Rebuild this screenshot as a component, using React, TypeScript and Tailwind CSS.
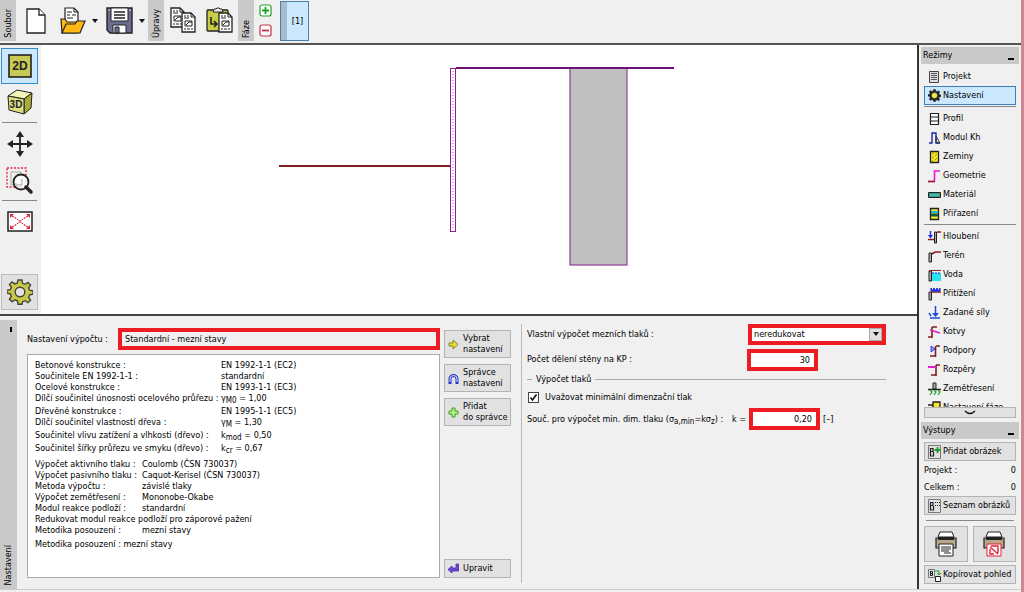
import React, { useState } from "react";
import clsx from "clsx";

type IconProps = { w: number; h: number; children: React.ReactNode };

function Icon({ w, h, children }: IconProps) {
  return (
    <svg width={w} height={h} viewBox={`0 0 ${w} ${h}`} fill="none" className="shrink-0" aria-hidden="true">
      {children}
    </svg>
  );
}

// ---- toolbar icons ----
const NewIcon = () => (
  <Icon w={20} h={26}>
    <path d="M1 1h12l6 6v18H1z" fill="#fff" stroke="#222" strokeWidth="1.3" />
    <path d="M13 1v6h6" fill="#fff" stroke="#222" strokeWidth="1.3" />
  </Icon>
);

const OpenIcon = () => (
  <Icon w={26} h={27}>
    <path d="M5 1h9l4 4v14H5z" fill="#fff" stroke="#222" strokeWidth="1.2" />
    <path d="M7 5h5M7 8h3M12 8h4M7 11h6M14 1v4h4" stroke="#222" />
    <path d="M1 12h4l2 3h12l-1 11H2z" fill="#fcb813" stroke="#222" strokeWidth="1.2" />
    <path d="M2 26l4-9h9l2-3h8l-5 12z" fill="#fcb813" stroke="#222" strokeWidth="1.2" />
  </Icon>
);

const SaveIcon = () => (
  <Icon w={27} h={27}>
    <path d="M1 1h25v25H4l-3-3z" fill="#6a6c90" stroke="#222" strokeWidth="1.4" />
    <path d="M5 1h17v13H5z" fill="#fff" stroke="#222" />
    <path d="M8 5h11M8 8h11M8 11h11" stroke="#222" strokeWidth="1.3" />
    <path d="M7 18h13v8H7z" fill="#fff" stroke="#222" />
    <path d="M9 20h4v6H9z" fill="#6a6c90" stroke="#222" />
    <path d="M2 3h2M23 3h2" stroke="#ddd" />
  </Icon>
);

const Page = ({ x, y }: { x: number; y: number }) => (
  <g transform={`translate(${x} ${y})`}>
    <path d="M1 1h9l4 4v15H1z" fill="#fff" stroke="#222" strokeWidth="1.3" />
    <path d="M10 1v4h4M3 4h2M6 4h2M3 6h5M3 17h2M6 17h3M10 17h2" stroke="#222" />
    <path d="M4 9h7v5H4zM5 13l3-3h3" stroke="#222" />
  </g>
);

const CopyIcon = () => (
  <Icon w={27} h={27}>
    <Page x={0} y={0} />
    <Page x={11} y={5} />
  </Icon>
);

const PasteIcon = () => (
  <Icon w={27} h={27}>
    <rect x="1" y="3" width="21" height="21" rx="1" fill="#c9cc45" stroke="#222" strokeWidth="1.3" />
    <path d="M7 5l1-3h2l1-1h2l1 1h2l1 3z" fill="#eee" stroke="#222" />
    <path d="M5 10v7h6M8 14l3 3-3 3" stroke="#222" strokeWidth="1.6" />
    <Page x={12} y={5} />
  </Icon>
);

const PhaseSign = ({ plus }: { plus?: boolean }) => (
  <Icon w={13} h={13}>
    <rect x="1" y="1" width="11" height="11" rx="2" fill="#fff" stroke={plus ? "#22a122" : "#c23048"} strokeWidth="1.2" />
    <path d={plus ? "M3 6.500h7M6.500 3v7" : "M3 6.500h7"} stroke={plus ? "#22a122" : "#c23048"} strokeWidth="1.800" />
  </Icon>
);

const Caret = () => (
  <Icon w={6} h={4}>
    <path d="M0 0h6L3 4z" fill="#111" />
  </Icon>
);

// ---- view bar icons ----
const View2D = () => (
  <Icon w={24} h={24}>
    <rect x="1" y="1" width="22" height="22" fill="#c8ca55" stroke="#222" strokeWidth="1.600" />
    <text x="12" y="16" textAnchor="middle" fontSize="12" fontWeight="bold" fill="#222" fontFamily="Liberation Sans, sans-serif">2D</text>
  </Icon>
);

const View3D = () => (
  <Icon w={26} h={26}>
    <path d="M1 7L10 1l15 3-8 6z" fill="#f2f3b5" stroke="#222" />
    <path d="M17 10l8-6-1 15-7 6z" fill="#a9ab3c" stroke="#222" />
    <path d="M1 7l16 3v15L2 21z" fill="#dcde86" stroke="#222" />
    <text x="9" y="19" textAnchor="middle" fontSize="10" fontWeight="bold" fill="#222" fontFamily="Liberation Sans, sans-serif">3D</text>
  </Icon>
);

const MoveIcon = () => (
  <Icon w={26} h={26}>
    <path d="M13 3v20M3 13h20" stroke="#222" strokeWidth="1.800" />
    <path d="M13 0l4 6H9zM13 26l4-6H9zM0 13l6-4v8zM26 13l-6-4v8z" fill="#222" />
  </Icon>
);

const ZoomIcon = () => (
  <Icon w={28} h={28}>
    <path d="M1 1h19v19H1z" stroke="#e2233b" strokeWidth="1.300" strokeDasharray="2 1.500" />
    <path d="M5 5h10v13H5z" stroke="#aaa" />
    <circle cx="15" cy="15" r="7.500" fill="#fff" fillOpacity="0.800" stroke="#222" strokeWidth="1.800" />
    <path d="M10 16v2h6v-6" stroke="#aaa" />
    <path d="M20 20l5 5" stroke="#222" strokeWidth="3.500" strokeLinecap="round" />
  </Icon>
);

const FitIcon = () => (
  <Icon w={26} h={21}>
    <rect x="1" y="1" width="24" height="19" fill="#fff" stroke="#222" strokeWidth="1.500" />
    <path d="M5 5l5 3M21 5l-5 3M5 16l5-3M21 16l-5-3" stroke="#e2233b" strokeWidth="1.200" strokeDasharray="2 1" />
    <path d="M10 8.500h1l4 4h1M16 8.500h-1l-4 4h-1" stroke="#e2233b" />
    <path d="M3 3h4L3 7zM23 3h-4l4 4zM3 18h4l-4-4zM23 18h-4l4-4z" fill="#e2233b" />
  </Icon>
);

type GearProps = { size: number; fill: string; stroke: string; hole: string; radius: number; line: number };

function Gear({ size, fill, stroke, hole, radius, line }: GearProps) {
  return (
    <svg width={size} height={size} viewBox="0 0 26 26" className="shrink-0" aria-hidden="true">
      <path
        d="M11 1h4l.6 3.300 2.500 1L21 3.400 23.600 6l-2 2.800 1 2.400 3.400.6v3.400l-3.400.6-1 2.500 2 2.800-2.700 2.600-2.800-2-2.500 1L15 25.200h-4l-.6-3.400-2.500-1-2.800 2L2.400 20.100l2-2.700-1-2.500L0 14.200v-3l3.400-.6 1-2.400-2-2.700L5 2.900l2.900 2 2.500-.9z"
        fill={fill}
        stroke={stroke}
        strokeWidth={line}
      />
      <circle cx="13" cy="13" r={radius} fill={hole} stroke={stroke} strokeWidth={line} />
    </svg>
  );
}

// ---- mode icons, all drawn in a 13x14 box ----
const modeIcons: Record<string, React.ReactNode> = {
  Projekt: (
    <>
      <path d="M1.500 1.500h9v11h-9z" fill="#ddd" stroke="#444" />
      <path d="M3 3.500h6M3 5.500h6M3 7.500h6M3 9.500h6" stroke="#555" />
    </>
  ),
  Profil: <path d="M2.500 1.500h8v11h-8zM2.500 5h8M2.500 9h8" fill="#fff" stroke="#222" strokeWidth="1.200" />,
  "Modul Kh": (
    <>
      <path d="M8 5l4 7H8z" fill="#eee840" stroke="#222" strokeWidth="0.800" />
      <path d="M1 12h3V2h4v10h4" stroke="#1a2a9c" strokeWidth="1.400" />
    </>
  ),
  Zeminy: (
    <>
      <path d="M2.500 1.500h8v11h-8z" fill="#f5e62c" stroke="#222" strokeWidth="1.300" />
      <path d="M4 4l2-1M7 6l2-2M4 8l2-1M7 10l2-2M4 11l1-1" stroke="#a58b00" />
    </>
  ),
  Geometrie: (
    <>
      <path d="M6.500 12V2H12" stroke="#f016d8" strokeWidth="1.600" />
      <path d="M0 12.500h7" stroke="#a01840" strokeWidth="1.800" />
    </>
  ),
  Materiál: (
    <>
      <path d="M0.500 4.500h12v5h-12z" fill="#2f9c8c" stroke="#222" />
      <path d="M2 7h9" stroke="#6ccabc" />
    </>
  ),
  Přiřazení: (
    <>
      <path d="M2.500 1.500h8v11h-8z" fill="#f5e62c" stroke="#222" strokeWidth="1.300" />
      <path d="M3 5h7" stroke="#15b8d8" strokeWidth="2" />
      <path d="M3 8h7" stroke="#0a5a50" strokeWidth="3" />
    </>
  ),
  Hloubení: (
    <>
      <path d="M2.500 1v5" stroke="#1a2ae0" strokeWidth="1.400" />
      <path d="M0 5h5L2.500 8.500z" fill="#1a2ae0" />
      <path d="M0 9.500h6" stroke="#8a1c1c" strokeWidth="1.500" />
      <path d="M6.500 2h2v11h-2z" fill="#aaa" stroke="#222" />
      <path d="M9 2h4" stroke="#8a1c1c" strokeWidth="1.500" />
    </>
  ),
  Terén: (
    <>
      <path d="M1 4h2.500v9H1z" fill="#aaa" stroke="#222" />
      <path d="M4 5l3-2h6" stroke="#8a1c1c" strokeWidth="1.600" />
    </>
  ),
  Voda: (
    <>
      <path d="M4 5h9v8H4z" fill="#26e4f0" />
      <path d="M1 3h2.500v10H1z" fill="#aaa" stroke="#222" />
      <path d="M1 2.500h12" stroke="#8a1c1c" />
      <path d="M4 5h9" stroke="#1a2ae0" strokeDasharray="2 1" />
    </>
  ),
  Přitížení: (
    <>
      <path d="M1 5h2.500v8H1z" fill="#aaa" stroke="#222" />
      <path d="M3 5h10" stroke="#8a1c1c" strokeWidth="1.500" />
      <path d="M3 1l1.500 3L6 1l1.500 3L9 1l1.500 3L12 1v3H3z" fill="#1a2ae0" stroke="#1a2ae0" />
    </>
  ),
  "Zadané síly": (
    <>
      <path d="M7.500 0v9M2 12h10M1 7l2 3" stroke="#1a4ae0" strokeWidth="1.500" />
      <path d="M4 7h7l-3.500 4z" fill="#1a4ae0" />
    </>
  ),
  Kotvy: (
    <>
      <path d="M4 2h5M4 2v11M0 12h4" stroke="#7a2020" strokeWidth="1.600" />
      <path d="M2 5l10 3" stroke="#e020c8" strokeWidth="1.800" />
    </>
  ),
  Podpory: (
    <>
      <path d="M8 2h4M7.500 2v11M2 12h5" stroke="#7a2020" strokeWidth="1.600" />
      <path d="M3 2v6l4-3z" fill="#8c90ff" stroke="#1a2ae0" strokeWidth="0.800" />
    </>
  ),
  Rozpěry: (
    <>
      <path d="M8 2h4M8 2v11M3 12h5" stroke="#7a2020" strokeWidth="1.600" />
      <path d="M0 4h8" stroke="#e020c8" strokeWidth="2" />
    </>
  ),
  Zemětřesení: (
    <>
      <path d="M5 1h3v6H5z" fill="#aaa" stroke="#222" />
      <path d="M0 7.500h13" stroke="#222" strokeWidth="1.500" />
      <path d="M2 8l2 2-2 3M6 8l2 2-2 3M10 8l2 2-2 3" stroke="#1f9a2e" strokeWidth="1.200" />
    </>
  ),
  "Nastavení fáze": (
    <>
      <path d="M0 4h5v8" stroke="#222" strokeWidth="1.500" />
      <path d="M5 1h7v11H5z" fill="#f5e62c" stroke="#222" strokeWidth="1.300" />
    </>
  ),
};

const modeGroups = [
  ["Projekt", "Nastavení"],
  ["Profil", "Modul Kh", "Zeminy", "Geometrie", "Materiál", "Přiřazení"],
  ["Hloubení", "Terén", "Voda", "Přitížení", "Zadané síly", "Kotvy", "Podpory", "Rozpěry", "Zemětřesení", "Nastavení fáze"],
];

const gamma = (sub: string, value: string) => (
  <>
    γ<Sub>{sub}</Sub> = {value}
  </>
);

const kCoef = (sub: string, value: string) => (
  <>
    k<Sub>{sub}</Sub> = {value}
  </>
);

function Sub({ children }: { children: React.ReactNode }) {
  return <sub className="text-[8px] leading-none">{children}</sub>;
}

function VerticalTab({ label }: { label: string }) {
  return (
    <div className="flex w-4 shrink-0 items-end justify-center bg-[#c9c9c9] pb-[3px]">
      <span className="rotate-180 [writing-mode:vertical-rl]">{label}</span>
    </div>
  );
}

function Toolbar() {
  return (
    <header className="flex h-[45px] shrink-0 items-stretch border-b-2 border-[#555] pb-0.5">
      <VerticalTab label="Soubor" />
      <div className="flex items-center gap-[14px] pr-[3px] pl-[10px]">
        <button aria-label="Nový"><NewIcon /></button>
        <div className="flex items-center gap-[6px]">
          <button aria-label="Otevřít"><OpenIcon /></button>
          <button aria-label="Poslední soubory"><Caret /></button>
        </div>
        <div className="-ml-1.5 flex items-center gap-[6px]">
          <button aria-label="Uložit"><SaveIcon /></button>
          <button aria-label="Možnosti uložení"><Caret /></button>
        </div>
      </div>
      <VerticalTab label="Úpravy" />
      <div className="flex items-center gap-[9px] pr-[5px] pl-[6px]">
        <button aria-label="Kopírovat"><CopyIcon /></button>
        <button aria-label="Vložit"><PasteIcon /></button>
      </div>
      <VerticalTab label="Fáze" />
      <div className="flex flex-col justify-between py-1 pr-2 pl-[5px]">
        <button aria-label="Přidat fázi"><PhaseSign plus /></button>
        <button aria-label="Odebrat fázi"><PhaseSign /></button>
      </div>
      <button className="mt-px flex w-[29px] items-stretch border border-[#4a7fa8] bg-[#cce8ff]">
        <span className="w-[6px] bg-[#a9bccb]" />
        <span className="flex-1 self-center text-center">[1]</span>
      </button>
    </header>
  );
}

function ViewBar() {
  return (
    <div className="flex w-[41px] shrink-0 flex-col items-start bg-[#f0f0f0] px-px pt-[3px] pb-1">
      <button aria-label="2D" className="flex h-[36px] w-[37px] items-center justify-center border border-[#3c8bc9] bg-[#cce8ff]">
        <View2D />
      </button>
      <button aria-label="3D" className="flex h-[36px] w-[37px] items-center justify-center"><View3D /></button>
      <hr className="mx-px mt-[2px] w-[35px] border-[#888]" />
      <button aria-label="Posun" className="flex h-[41px] w-[37px] items-center justify-center"><MoveIcon /></button>
      <button aria-label="Lupa" className="flex h-[34px] w-[37px] items-center justify-center"><ZoomIcon /></button>
      <hr className="mx-px mt-[2px] w-[35px] border-[#888]" />
      <button aria-label="Zobrazit vše" className="flex h-[40px] w-[37px] items-center justify-center"><FitIcon /></button>
      <button aria-label="Nastavení kreslení" className="mt-auto flex h-[36px] w-[37px] items-center justify-center border border-[#bbb] bg-[#e1e1e1]">
        <Gear size={26} fill="#c8ca45" stroke="#444" hole="#e1e1e1" radius={4.8} line={1.4} />
      </button>
    </div>
  );
}

function Drawing() {
  return (
    <div className="min-w-0 flex-1 bg-white">
      <svg viewBox="41 45 876 269" className="block h-full w-full" fill="none" role="img" aria-label="Schéma stěny">
        <rect x="570" y="68" width="57" height="197" fill="#c0c0c0" stroke="#8c3c96" strokeWidth="1.200" />
        <path d="M279 166h171" stroke="#7a1f24" strokeWidth="1.800" />
        <path d="M456 68h218" stroke="#6e1078" strokeWidth="1.800" />
        <rect x="450.500" y="68.500" width="5" height="163" fill="#fff" stroke="#8a1f92" />
        <path d="M453 71v159" stroke="#a050a8" strokeDasharray="1 2" />
      </svg>
    </div>
  );
}

type LineProps = { label: string; value?: React.ReactNode; tall?: boolean; wide?: boolean };

function Line({ label, value, tall, wide }: LineProps) {
  return (
    <div className={clsx("flex whitespace-nowrap", tall ? "h-[13px]" : "h-[11px]")}>
      <dt className={clsx(value && (wide ? "w-[186px]" : "w-[107px]"))}>{label}</dt>
      {value && <dd>{value}</dd>}
    </div>
  );
}

function SettingsSummary() {
  return (
    <dl className="min-h-0 flex-1 overflow-hidden border border-[#aaa] bg-white pt-[5px] pl-[7px] leading-[11px]">
      <Line wide label="Betonové konstrukce :" value="EN 1992-1-1 (EC2)" />
      <Line wide label="Součinitele EN 1992-1-1 :" value="standardní" />
      <Line wide label="Ocelové konstrukce :" value="EN 1993-1-1 (EC3)" />
      <Line wide tall label="Dílčí součinitel únosnosti ocelového průřezu :" value={gamma("M0", "1,00")} />
      <Line wide label="Dřevěné konstrukce :" value="EN 1995-1-1 (EC5)" />
      <Line wide tall label="Dílčí součinitel vlastností dřeva :" value={gamma("M", "1,30")} />
      <Line wide tall label="Součinitel vlivu zatížení a vlhkosti (dřevo) :" value={kCoef("mod", "0,50")} />
      <Line wide tall label="Součinitel šířky průřezu ve smyku (dřevo) :" value={kCoef("cr", "0,67")} />
      <div className="my-[3px]">
        <Line label="Výpočet aktivního tlaku :" value="Coulomb (ČSN 730037)" />
        <Line label="Výpočet pasivního tlaku :" value="Caquot-Kerisel (ČSN 730037)" />
        <Line label="Metoda výpočtu :" value="závislé tlaky" />
        <Line label="Výpočet zemětřesení :" value="Mononobe-Okabe" />
        <Line label="Modul reakce podloží :" value="standardní" />
        <Line label="Redukovat modul reakce podloží pro záporové pažení" />
        <Line label="Metodika posouzení :" value="mezní stavy" />
      </div>
      <Line label="Metodika posouzení : mezní stavy" />
    </dl>
  );
}

function ActionButton({ icon, children }: { icon: React.ReactNode; children: React.ReactNode }) {
  return (
    <button className="flex items-center gap-1 border border-[#b4b4b4] bg-[#e1e1e1] py-[2px] pl-[3px] text-left leading-[11px] whitespace-nowrap">
      {icon}
      <span>{children}</span>
    </button>
  );
}

function BottomPanel() {
  const [check, setCheck] = useState<boolean>(true);
  const [reduction, setReduction] = useState<string>("neredukovat");
  const [division, setDivision] = useState<string>("30");
  const [coef, setCoef] = useState<string>("0,20");

  return (
    <section className="flex h-[273px] shrink-0 pt-1">
      <div className="flex w-[17px] shrink-0 flex-col items-center justify-between bg-[#c9c9c9] pt-[7px] pb-[3px]">
        <span className="ml-[5px] h-[5px] w-[2px] bg-black" />
        <span className="rotate-180 [writing-mode:vertical-rl]">Nastavení</span>
      </div>

      <div className="flex w-[423px] shrink-0 flex-col pt-2 pb-[11px] pl-[10px]">
        <div className="mb-1 flex items-center">
          <label htmlFor="calc" className="w-[91px] whitespace-nowrap">Nastavení výpočtu :</label>
          <input id="calc" readOnly value="Standardní - mezní stavy" className="h-[22px] min-w-0 flex-1 border-4 border-[#ed1c24] bg-[#f0f0f0] pl-[3px] outline-none" />
        </div>
        <SettingsSummary />
      </div>

      <div className="flex w-[71px] shrink-0 flex-col gap-[6px] pt-[10px] pb-[11px] pl-1">
        <ActionButton icon={<Icon w={11} h={11}><path d="M1 4h4V1l5 4.500L5 10V7H1z" fill="#e8dc3c" stroke="#8a8420" /></Icon>}>
          Vybrat<br />nastavení
        </ActionButton>
        <ActionButton icon={<Icon w={11} h={11}><path d="M2 11V6a3.500 3.500 0 0 1 7 0v5" stroke="#2438c8" strokeWidth="3" /><path d="M2 9V6a3.500 3.500 0 0 1 7 0v3" stroke="#dfe4ff" /></Icon>}>
          Správce<br />nastavení
        </ActionButton>
        <ActionButton icon={<Icon w={11} h={11}><path d="M4 1h3v3h3v3H7v3H4V7H1V4h3z" fill="#b8f08c" stroke="#3aa022" /></Icon>}>
          Přidat<br />do správce
        </ActionButton>
        <div className="mt-auto flex flex-col [&>button]:h-[19px]">
          <ActionButton icon={<Icon w={11} h={11}><path d="M0 6.500L4 3v2h4V1h2.500v7H4v2z" fill="#6a48d0" stroke="#4a2ca8" strokeWidth="0.800" /></Icon>}>
            Upravit
          </ActionButton>
        </div>
      </div>

      <div className="mt-1 mb-[6px] ml-[10px] w-px shrink-0 bg-[#bbb]" />

      <div className="flex max-w-[364px] min-w-0 flex-1 flex-col pt-[3px] pl-[5px] whitespace-nowrap">
        <div className="flex h-[22px] items-center justify-between">
          <label htmlFor="own">Vlastní výpočet mezních tlaků :</label>
          <div className="relative">
            <select
              id="own"
              value={reduction}
              onChange={(e) => setReduction(e.target.value)}
              className="h-[21px] w-[138px] appearance-none border-4 border-[#ed1c24] bg-white pl-[2px] outline-none"
            >
              <option>neredukovat</option>
              <option>redukovat</option>
            </select>
            <span className="pointer-events-none absolute top-1 right-1 flex h-[13px] w-[13px] items-center justify-center border border-[#aaa] bg-[#e1e1e1]">
              <Caret />
            </span>
          </div>
        </div>
        <div className="mt-[3px] flex h-[23px] items-center">
          <label htmlFor="division" className="w-[220px]">Počet dělení stěny na KP :</label>
          <input id="division" value={division} onChange={(e) => setDivision(e.target.value)} className="h-[22px] w-[71px] border-4 border-[#ed1c24] bg-white pr-1 text-right outline-none" />
        </div>
        <fieldset className="mt-[3px]">
          <legend className="flex w-full items-center gap-1">
            <span className="h-px w-[5px] bg-[#aaa]" />
            Výpočet tlaků
            <span className="h-px flex-1 bg-[#aaa]" />
          </legend>
          <label className="mt-[5px] flex h-[14px] items-center gap-[6px] pl-px">
            <input
              type="checkbox"
              checked={check}
              onChange={(e) => setCheck(e.target.checked)}
              className="peer h-[11px] w-[11px] appearance-none border border-[#444] bg-white"
            />
            <span className="pointer-events-none -ml-[17px] hidden h-[11px] w-[11px] items-center justify-center peer-checked:flex">
              <Icon w={9} h={9}><path d="M1.500 4.500l2 2.500 4-5.500" stroke="#111" strokeWidth="1.600" /></Icon>
            </span>
            Uvažovat minimální dimenzační tlak
          </label>
          <div className="mt-1 flex h-[22px] items-center">
            <label htmlFor="coef" className="flex w-[222px]">
              <span className="w-[205px]">Souč. pro výpočet min. dim. tlaku (σ<Sub>a,min</Sub>=kσ<Sub>z</Sub>) :</span>
              <span>k =</span>
            </label>
            <input id="coef" value={coef} onChange={(e) => setCoef(e.target.value)} className="h-[22px] w-[71px] border-4 border-[#ed1c24] bg-white pr-1 text-right outline-none" />
            <span className="ml-[3px]">[–]</span>
          </div>
        </fieldset>
      </div>
    </section>
  );
}

function PanelHeader({ title }: { title: string }) {
  return (
    <div className="mx-[2px] flex h-[17px] shrink-0 items-center justify-between bg-[#c9c9c9] pr-[5px] pl-[2px]">
      <h2>{title}</h2>
      <button aria-label="Sbalit" className="mt-[6px] h-[2px] w-[6px] bg-black" />
    </div>
  );
}

function SideButton({ icon, children }: { icon: React.ReactNode; children: React.ReactNode }) {
  return (
    <button className="flex h-[19px] shrink-0 items-center gap-[2px] border border-[#b4b4b4] bg-[#e1e1e1] pl-[3px] whitespace-nowrap">
      {icon}
      {children}
    </button>
  );
}

const Letter = () => <path d="M2.500 3v8M2 3.500h3v3H3M5.500 7v4H2" stroke="#222" strokeWidth="1.200" />;

const Printer = ({ pdf }: { pdf?: boolean }) => (
  <Icon w={22} h={26}>
    <path d="M5 1h12l2 5H3z" fill="#fff" stroke="#222" />
    <path d="M1 7h20v10H1z" fill="#b8a888" stroke="#222" strokeWidth="1.200" />
    <path d="M3 6h16v3H3z" fill="#222" />
    <path d="M4 13h14v12H4z" fill="#fff" stroke={pdf ? "#e2233b" : "#222"} />
    {pdf ? (
      <path d="M7 16l8 7M8 15h7v7M7 18v5h4" stroke="#e2233b" strokeWidth="1.400" />
    ) : (
      <path d="M6 16h10M6 18h10M6 20h8M9 22h7" stroke="#222" />
    )}
  </Icon>
);

function Sidebar() {
  const [active, setActive] = useState<string>("Nastavení");

  return (
    <aside className="flex w-[104px] shrink-0 flex-col border-l-2 border-[#333] pt-[2px] pb-[5px]">
      <PanelHeader title="Režimy" />
      <nav className="mx-[5px] mt-[3px] min-h-0 flex-1 overflow-hidden">
        {modeGroups.map((group, index) => (
          <div key={index} className={clsx(index > 0 && "mt-px border-t border-[#888] pt-[2px]")}>
            {group.map((mode) => (
              <button
                key={mode}
                onClick={() => setActive(mode)}
                className={clsx(
                  "flex h-[19px] w-full items-center gap-[2px] border pl-[3px] whitespace-nowrap",
                  mode === active ? "border-[#3c7fb9] bg-[#cce8ff]" : "border-transparent"
                )}
              >
                {mode === "Nastavení" ? (
                  <Gear size={13} fill="#222" stroke="#222" hole="#f0ec50" radius={6} line={1} />
                ) : (
                  <Icon w={13} h={14}>{modeIcons[mode]}</Icon>
                )}
                {mode}
              </button>
            ))}
          </div>
        ))}
      </nav>
      <button aria-label="Další režimy" className="mx-[5px] flex h-[11px] shrink-0 items-center justify-center border border-[#b4b4b4] bg-[#e1e1e1]">
        <Icon w={12} h={5}><path d="M1 1q5 5 10 0" stroke="#111" strokeWidth="1.400" /></Icon>
      </button>
      <div className="mt-1"><PanelHeader title="Výstupy" /></div>
      <div className="mx-[5px] mt-[3px] flex shrink-0 flex-col">
        <SideButton icon={<Icon w={13} h={14}><path d="M0.500 0.500h12v13H0.500z" stroke="#777" /><Letter /><path d="M9.500 2v6M6.500 5h6" stroke="#1f9a2e" strokeWidth="1.800" /></Icon>}>
          Přidat obrázek
        </SideButton>
        <div className="flex h-[17px] items-center justify-between pt-px"><span>Projekt :</span><span>0</span></div>
        <div className="flex h-[17px] items-center justify-between pt-px"><span>Celkem :</span><span>0</span></div>
        <div className="mt-px flex flex-col">
          <SideButton icon={<Icon w={13} h={14}><path d="M0.500 0.500h12v13H0.500z" stroke="#777" /><Letter /><path d="M7 3.500h5M7 6.500h5" stroke="#222" strokeDasharray="1 1" /></Icon>}>
            Seznam obrázků
          </SideButton>
        </div>
        <hr className="mx-[2px] my-[5px] border-[#888]" />
        <div className="grid grid-cols-2 gap-[5px]">
          <button aria-label="Tisk" className="flex h-[36px] items-center justify-center border border-[#b4b4b4] bg-[#e1e1e1]"><Printer /></button>
          <button aria-label="Tisk do PDF" className="flex h-[36px] items-center justify-center border border-[#b4b4b4] bg-[#e1e1e1]"><Printer pdf /></button>
        </div>
        <div className="mt-[3px] flex flex-col">
          <SideButton icon={<Icon w={13} h={14}><path d="M0.500 1.500h6v8h-6z" stroke="#777" /><path d="M2.500 3v5M2 3.500h2.500v4H2M2 5.500h3" stroke="#222" /><path d="M7 3h4v4M9 5l2 2 2-2" stroke="#1f9a2e" /><path d="M7.500 8.500h5v5h-5z" fill="#fff" stroke="#222" /></Icon>}>
            Kopírovat pohled
          </SideButton>
        </div>
      </div>
    </aside>
  );
}

export default function App() {
  return (
    <div className="flex h-screen flex-col overflow-hidden border-r-[3px] border-[#cf8592] bg-[#f0f0f0] font-['DejaVu_Sans_Condensed','DejaVu_Sans',sans-serif] text-[9px] leading-[11px] text-black">
      <Toolbar />
      <div className="flex min-h-0 flex-1 border-b border-[#ccc]">
        <main className="flex min-w-0 flex-1 flex-col">
          <div className="flex min-h-0 flex-1 border-b-2 border-[#444]">
            <ViewBar />
            <Drawing />
          </div>
          <BottomPanel />
        </main>
        <Sidebar />
      </div>
      <footer className="h-[2px] shrink-0" />
    </div>
  );
}
